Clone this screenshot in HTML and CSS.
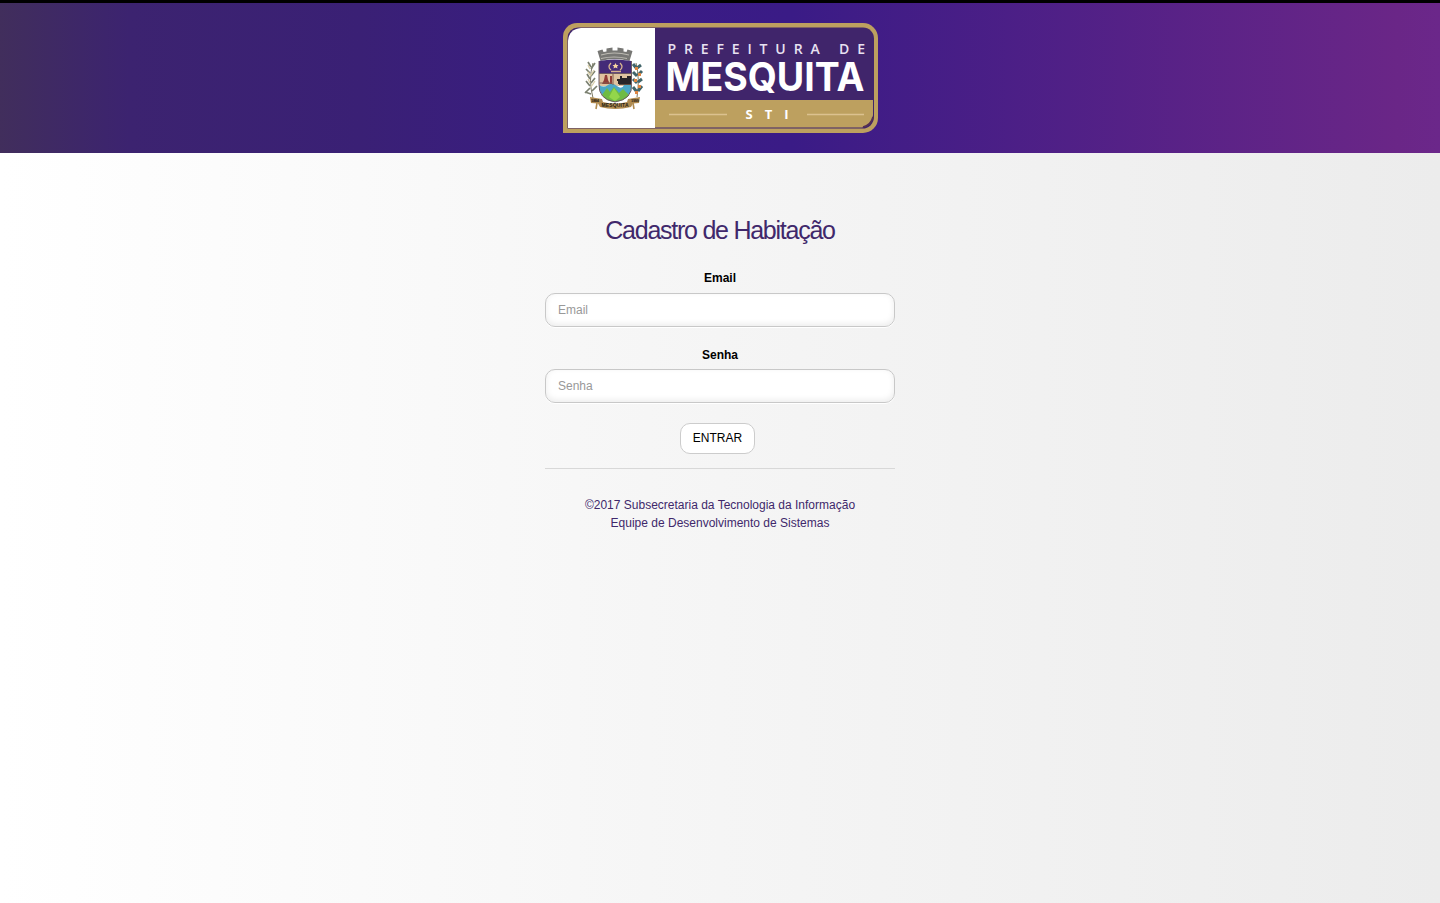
FILE: index.html
```html
<!DOCTYPE html>
<html lang="pt-br">
<head>
<meta charset="utf-8">
<title>Cadastro de Habitação</title>
<link rel="stylesheet" href="styles.css">
</head>
<body>
<header class="topbar">
<svg class="logo" width="315" height="110" viewBox="563 23 315 110" role="img" aria-label="Prefeitura de Mesquita">
  <path class="gold" d="M563 133V37a14 14 0 0 1 14-14H863a15 15 0 0 1 15 15V118a15 15 0 0 1-15 15Z"/>
  <path fill="#40256b" d="M567.500 128.500V38a10.500 10.500 0 0 1 10.500-10.500H863a11 11 0 0 1 11 11V117a11.500 11.500 0 0 1-11.500 11.500Z"/>
  <path fill="#fff" d="M568 128V41Q569 29 581 28H655V128Z"/>
  <path class="gold" d="M655 100H873V115Q872 126 862 127.500H655Z"/>
  <path d="M863 127Q871 125 873 117" fill="none" stroke="#553052" stroke-width="1.600"/>
  <g class="logo-text">
    <text class="small" x="667.500" y="53.500" textLength="197.500">PREFEITURA DE</text>
    <text class="big" x="665.500" y="91" textLength="199" lengthAdjust="spacingAndGlyphs">MESQUITA</text>
    <text class="sti" x="745.500" y="119" textLength="43">STI</text>
  </g>
  <path d="M669 114.500H727M807 114.500H864" stroke="#dcc18f" stroke-width="1.400"/>
  <g>
    <path fill="#777774" d="M597.500 51l5-1.500 1 2.500 3-.5v-3l6-1v3h5v-3l6 1v3l3 .5 1-2.500 5 1.500-3 10q-15-4-29 0Z"/>
    <path d="M601 55q13-4 28 0M601 58.500q13-3 26 0" fill="none" stroke="#bbb9b1" stroke-width="1.200"/>
    <path fill="#442a78" d="M599 61q15-3 32.500 0v13H599Z"/>
    <path fill="#dfc39f" d="M599 73.500h32.500V86H599Z"/>
    <path fill="#4ca7c5" d="M599 85q5 3 9 0t9 1 7-1 7.500 0q1 13-16.500 16.500Q599 98 599 85Z"/>
    <path fill="#6fbb43" d="M602 95l5-7 3 4 4-5 5 6 4-4 6 6q-4 6-14.500 7-9-1-12.500-7Z"/>
    <path fill="#93d64b" d="M609 97l5-9 6 9-5 4Z"/>
    <path d="M599 61v23q-1 15 16 18 18-3 16.500-18V61M599 73.500h32.500" fill="none" stroke="#6d5a62"/>
    <path d="M611 63q-4 4 0 7M620 63q4 4 0 7M611 71.500h10" fill="none" stroke="#d6b38e" stroke-width="1.300"/>
    <path fill="#f7d4a1" d="M615.500 63l1 2h2l-1.500 1.500.5 2-2-1-2 1 .5-2-1.500-1.500h2Z"/>
    <path fill="#913d38" d="M605 75h2l1 5 2 4h-8l2-4ZM610 76h2v8h-2Z"/>
    <path d="M599.500 83h13M613 74v11" stroke="#815d50"/>
    <path fill="#282528" d="M617 79h3v-3h2v2h5v-2h4v8h-13v-3h-1Z"/>
    <path d="M619 84.500h12" stroke="#604f42"/>
    <path d="M593 98q-5-18 0-35M637 97q3-18-1-34" fill="none" stroke="#7d7a63"/>
    <path d="M591 67l-3-5M590 73l-4-4M590 79l-3-5M590 86l-4-5M591 94l-6-2M591 69l4-6M591 76l4-5M591 83l4-5M592 91l5-5M590 88l-5 5" stroke="#7b8070" stroke-width="1.700"/>
    <path d="M588 65l2 4M594 70l-3 5M588 79l2 4M595 81l-4 6M588 72l3 4" stroke="#d9cfab" stroke-width="1.300"/>
    <path d="M637 69l-4-5M637 76l-4-4M637 83l-4-4M637 92l-4-5M637 68l4-3M638 75l4-4M638 82l4-3M638 91l4-5" stroke="#42656a" stroke-width="3"/>
    <path fill="#df8541" d="M635 67h3v3h-3zM638 73h3v3h-3zM634 79h3v3h-3zM638 85h3v3h-3zM635 91h3v3h-3z"/>
    <path fill="#b08b50" d="M590 97l12 2 1 3q12 3 24 0l1-3 12-2-1 6-6 .5-2 3.500q-16 4-31 0l-2-3.500-7-.5Z"/>
    <path d="M597 103l-1 6M633 103l1 6" stroke="#b08b50" stroke-width="1.600"/>
    <g class="crest-text"><text x="601.500" y="106.500" textLength="27">MESQUITA</text><text class="year" x="591" y="102" textLength="8">1884</text><text class="year" x="631" y="102" textLength="8">1999</text></g>
  </g>
</svg>
</header>
<main class="login">
  <h1 class="title">Cadastro de Habitação</h1>
  <form>
    <div class="field"><label for="email">Email</label><input id="email" type="email" placeholder="Email"></div>
    <div class="field password"><label for="senha">Senha</label><input id="senha" type="password" placeholder="Senha"></div>
    <div class="actions"><button type="button">ENTRAR</button></div>
  </form>
  <footer class="credits">©2017 Subsecretaria da Tecnologia da Informação<br>Equipe de Desenvolvimento de Sistemas</footer>
</main>
</body>
</html>
```
FILE: styles.css
```css
* { box-sizing: border-box; }
body {
  margin: 0;
  min-height: 903px;
  font: 12px/18px "Liberation Sans", Arial, sans-serif;
  color: #000;
  background: linear-gradient(to right, #fff 0%, #f5f5f5 50%, #ececec 100%);
}
.topbar {
  height: 153px;
  border-top: 3px solid #000;
  padding-top: 20px;
  display: flex;
  justify-content: center;
  align-items: flex-start;
  background: linear-gradient(to right, #412e5c 0%, #3c2370 9%, #3a2075 25%, #391c84 41%, #3a1b86 55%, #6a2687 97%, #6b278a 100%);
}
.logo { display: block; margin-left: 1px; }
.gold { fill: #bda05f; }
.logo-text { fill: #fff; font-family: "Open Sans", sans-serif; }
.small { font-size: 14px; font-weight: 600; fill: #e8e1f1; }
.big { font-family: Inter, "Liberation Sans", sans-serif; font-size: 39px; font-weight: 700; }
.sti { font-size: 13px; font-weight: 700; }
.crest-text { font: 700 5px "Liberation Sans", sans-serif; fill: #251d15; }
.year { font-size: 4px; }
.login {
  width: 350px;
  margin: 0 auto;
  padding-top: 62px;
  text-align: center;
}
.title {
  margin: 0 0 24px;
  font-size: 25px;
  line-height: 30px;
  font-weight: 400;
  letter-spacing: -1.25px;
  color: #40286b;
}
.field { height: 76px; }
.field label { display: block; height: 24px; font-weight: 700; }
.password label { padding-top: 1px; }
.field input {
  display: block;
  width: 350px;
  height: 34px;
  padding: 6px 12px;
  border: 1px solid #c8c8c8;
  border-radius: 10px;
  background: #fff;
  font: inherit;
  box-shadow: 0 1px 0 #fff, inset 0 -2px 6px rgba(0, 0, 0, .08);
}
.field input::placeholder { color: #999; opacity: 1; }
.actions { padding: 2px 5px 14px 0; border-bottom: 1px solid #d8d8d8; display: flex; justify-content: center; }
.actions button {
  width: 75px;
  height: 31px;
  padding: 0 0 2px;
  border: 1px solid #ccc;
  border-radius: 10px;
  background: #fff;
  color: #000;
  font: inherit;
}
.credits { padding-top: 27px; color: #40286b; }
```
